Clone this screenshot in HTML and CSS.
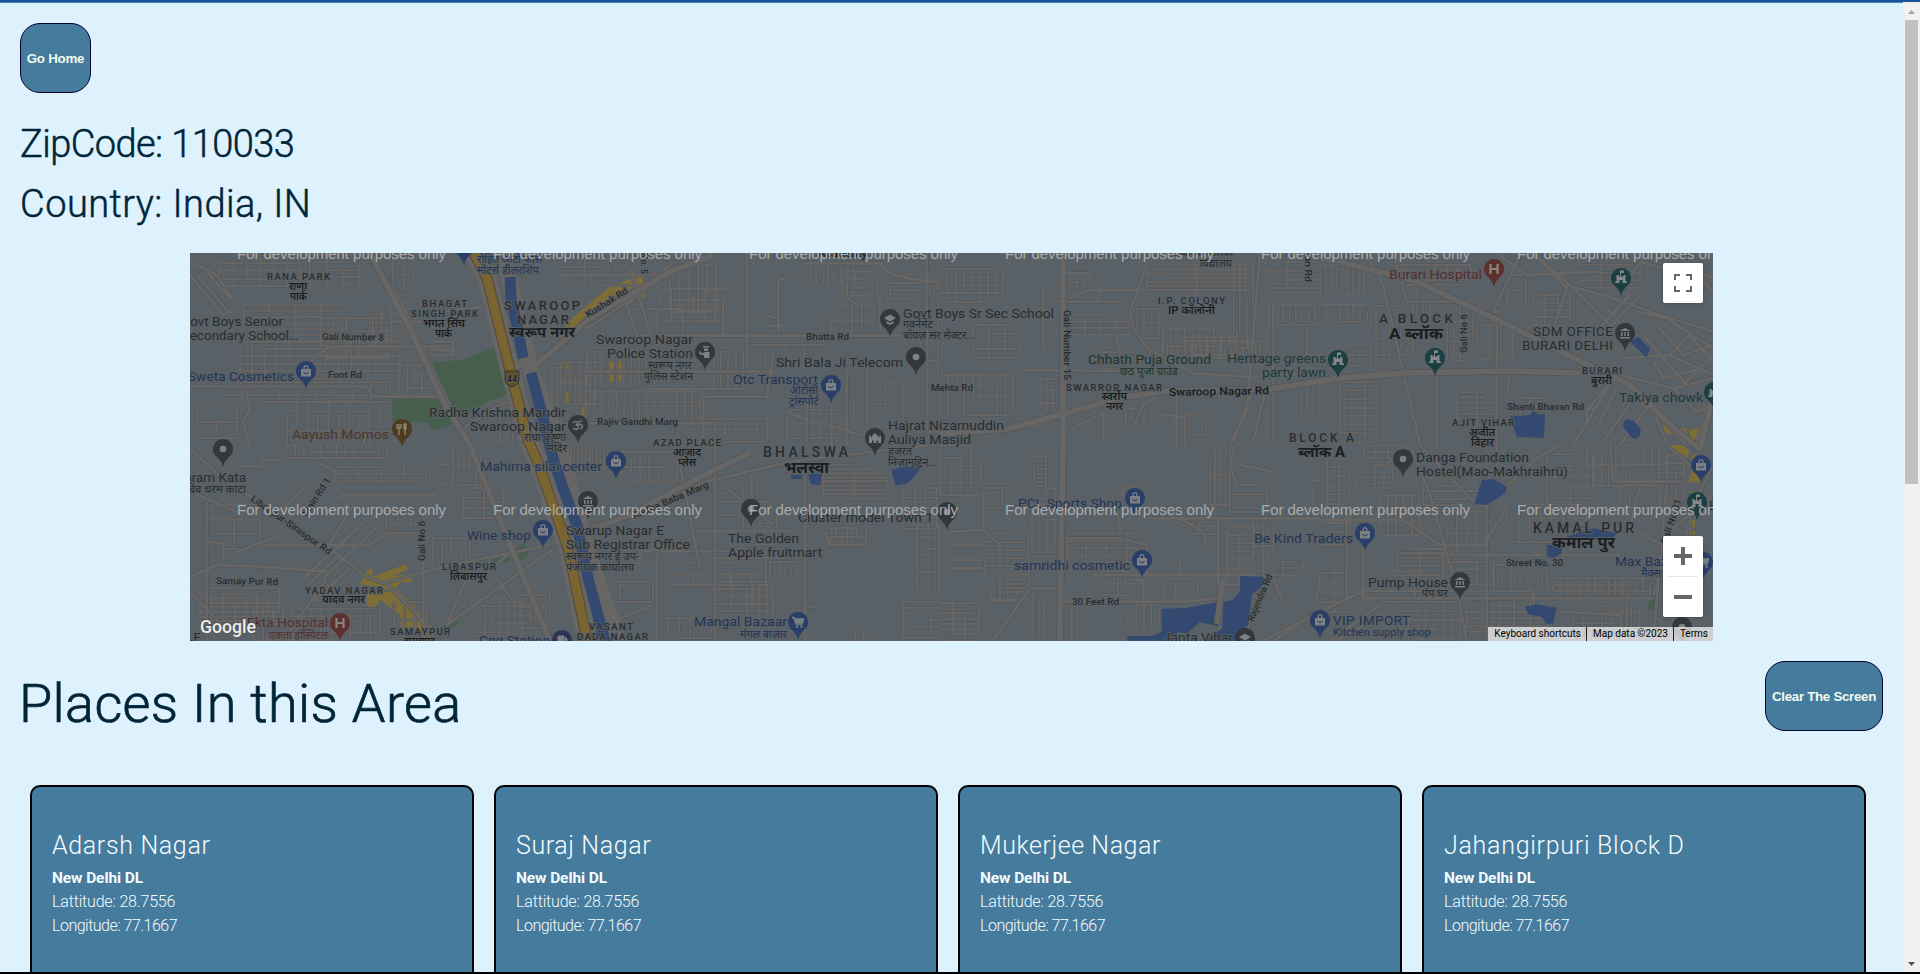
FILE: index.html
```html
<!DOCTYPE html>
<html lang="en">
<head>
<meta charset="utf-8">
<title>ZipCode Places</title>
<link rel="stylesheet" href="styles.css">
</head>
<body>
<div class="window">
  <main class="page">
    <button class="btn home">Go Home</button>
    <h2 class="info">
      <span class="info-line zip">ZipCode: 110033</span>
      <span class="info-line country">Country: India, IN</span>
    </h2>
    <section class="map">
      <svg class="map-canvas" id="map" viewBox="190 253 1523 388"></svg>
      <div class="control fullscreen">
        <svg width="18" height="18" viewBox="0 0 18 18"><path d="M0 0v6h2V2h4V0zM16 0h-4v2h4v4h2V0zM16 16h-4v2h6v-6h-2zM2 12H0v6h6v-2H2z" fill="#666"/></svg>
      </div>
      <div class="control zoom">
        <svg width="18" height="18" viewBox="0 0 18 18"><path d="M18 7h-7V0H7v7H0v4h7v7h4v-7h7z" fill="#666"/></svg>
        <i class="zoom-line"></i>
        <svg width="18" height="18" viewBox="0 0 18 18"><path d="M0 7h18v4H0z" fill="#666"/></svg>
      </div>
      <div class="credits"><span>Keyboard shortcuts</span><span>Map data ©2023</span><span>Terms</span></div>
    </section>
    <div class="places-head">
      <h1 class="places-title">Places In this Area</h1>
      <button class="btn clear">Clear The Screen</button>
    </div>
    <section class="cards">
      <article class="card"><h3 class="name n1">Adarsh Nagar</h3><b class="state">New Delhi DL</b><p class="coord">Lattitude: 28.7556</p><p class="coord long">Longitude: 77.1667</p></article>
      <article class="card"><h3 class="name n2">Suraj Nagar</h3><b class="state">New Delhi DL</b><p class="coord">Lattitude: 28.7556</p><p class="coord long">Longitude: 77.1667</p></article>
      <article class="card"><h3 class="name n3">Mukerjee Nagar</h3><b class="state">New Delhi DL</b><p class="coord">Lattitude: 28.7556</p><p class="coord long">Longitude: 77.1667</p></article>
      <article class="card"><h3 class="name n4">Jahangirpuri Block D</h3><b class="state">New Delhi DL</b><p class="coord">Lattitude: 28.7556</p><p class="coord long">Longitude: 77.1667</p></article>
    </section>
  </main>
  <aside class="scrollbar">
    <svg width="7" height="4" viewBox="0 0 7 4"><path d="M0 4h7L3.500 0z" fill="#a3a3a3"/></svg>
    <i class="thumb"></i>
    <svg class="down" width="7" height="4" viewBox="0 0 7 4"><path d="M0 0h7L3.500 4z" fill="#505050"/></svg>
  </aside>
</div>
<script src="map.js"></script>
</body>
</html>
```

FILE: styles.css
```css
* { box-sizing: border-box; }
body { margin: 0; height: 974px; overflow: hidden; font-family: Roboto, "Open Sans", sans-serif; background: #def2fe; }
.window { height: 974px; display: flex; border-top: 2px solid #1a529a; border-bottom: 2px solid #000; box-shadow: inset 0 1px 0 #4585bd; overflow: hidden; }
.page { flex: 1; padding: 21px 20px 0; height: 970px; overflow: hidden; }
.btn { display: block; height: 70px; padding: 0; border: 1px solid #03032e; border-radius: 20px; background: #457b9d; color: #f1faee; font: bold 13.33px "Liberation Sans", Arial, sans-serif; white-space: nowrap; }
.home { width: 71px; letter-spacing: -.25px; }
.clear { width: 118px; letter-spacing: -.3px; }
.info { margin: 21px 0 0; font-weight: 300; font-size: 38px; line-height: 60px; color: #002538; -webkit-text-stroke: .5px #002538; }
.info-line { display: block; width: max-content; }
.zip { letter-spacing: -.57px; }
.country { letter-spacing: .45px; }
.map { position: relative; width: 1523px; height: 388px; margin: 19px 0 0 170px; overflow: hidden; background: #596167; }
.map-canvas { display: block; width: 1523px; height: 388px; }
.control { position: absolute; right: 10px; width: 40px; background: #fff; border-radius: 2px; display: flex; flex-direction: column; align-items: center; box-shadow: 0 1px 4px -1px rgba(0,0,0,.3); }
.fullscreen { top: 10px; height: 40px; justify-content: center; }
.zoom { bottom: 24px; height: 81px; justify-content: space-between; padding: 11px 0; }
.zoom-line { width: 30px; height: 1px; background: #e6e6e6; }
.credits { position: absolute; right: 0; bottom: 0; height: 14px; display: flex; background: rgba(245,245,245,.74); font-size: 10px; line-height: 14px; color: #000; }
.credits span { padding: 0 5px 0 6px; }
.credits span + span { border-left: 1px solid #222; }
.places-head { display: flex; justify-content: space-between; align-items: flex-start; margin-top: 20px; height: 124px; }
.places-title { margin: 8px 0 0 -1px; font-weight: 300; font-size: 54px; line-height: 70px; letter-spacing: .35px; color: #002538; -webkit-text-stroke: .7px #002538; }
.cards { display: grid; grid-template-columns: repeat(4, 444px); column-gap: 20px; padding-left: 10px; }
.card { height: 260px; padding: 39px 20px; border: 2px solid #000; border-radius: 10px; background: #457b9d; color: #f5fbfd; }
.name { margin: 0; font-weight: 300; font-size: 25px; line-height: 40px; white-space: nowrap; width: max-content; }
.n1 { letter-spacing: .65px; }
.n2 { letter-spacing: .6px; }
.n3 { letter-spacing: .55px; }
.n4 { letter-spacing: .72px; }
.state { display: block; width: max-content; font-size: 15.500px; line-height: 24px; letter-spacing: -.1px; }
.coord { margin: 0; width: max-content; font-weight: 300; font-size: 16px; line-height: 24px; letter-spacing: -.17px; }
.long { letter-spacing: -.5px; }
.scrollbar { width: 17px; background: #f1f1f1; display: flex; flex-direction: column; align-items: center; padding: 8px 0 6px; }
.thumb { width: 13px; height: 464px; margin-top: 6px; background: #c1c1c1; }
.down { margin-top: auto; }
```

FILE: map.js
```javascript
const svg = document.getElementById('map');
const road = '#686665', edge = '#52575b';
const out = [];
let seed = 7;
const rnd = () => (seed = (seed * 16807) % 2147483647) / 2147483647;

// Blocks of small lanes: x, y, width, height, columns, rows
function lanes(x, y, w, h, cols, rows) {
  let d = '';
  for (let i = 0; i < cols; i++) {
    const cx = x + (w * i) / Math.max(1, cols - 1) + (rnd() - .5) * 4;
    const a = rnd() < .6 ? 0 : rnd() * h * .45, b = rnd() < .6 ? 0 : rnd() * h * .45;
    d += `M${cx.toFixed(1)} ${(y + a).toFixed(1)}V${(y + h - b).toFixed(1)}`;
  }
  for (let j = 0; j < rows; j++) {
    const cy = y + (h * j) / Math.max(1, rows - 1) + (rnd() - .5) * 4;
    const a = rnd() < .6 ? 0 : rnd() * w * .45, b = rnd() < .6 ? 0 : rnd() * w * .45;
    d += `M${(x + a).toFixed(1)} ${cy.toFixed(1)}H${(x + w - b).toFixed(1)}`;
  }
  return d;
}

// Each sheet is drawn at three units per pixel.
const sheets = [
  { at: [180, 245],
    blue: '', green: 'M755 352L845 345L942 308L985 448L925 470L870 500L808 515ZM637 460L790 458L828 535L757 557L745 532L637 530Z',
    lanes: [[120,30,240,95,7,5],[390,30,150,110,4,6],[190,180,310,110,5,7],[180,290,480,110,14,6],[420,220,200,120,6,4],[570,185,130,120,5,6],[130,410,500,60,10,4],[320,470,280,130,10,4],[640,30,60,120,3,3],[660,360,90,100,5,4],[50,480,120,100,3,3],[1100,370,100,200,7,1],[920,470,80,120,3,2]],
    roads: 'M30 90L130 210L160 190M30 50L110 90L160 165M570 24L660 165L700 250L800 460L860 590M700 210L910 185M30 425H560L580 455H800M200 445L210 490L190 530L210 600M410 330L450 305H790M760 290H820V330H750M750 315H820M640 230H800M550 600L560 560H640M840 555L960 480L1010 465M50 90L150 205M80 80L150 160M1000 380L1060 360L1090 340L1200 225' },
  { at: [180, 445],
    green: 'M935 340L985 318L990 345L945 366ZM1003 308L1035 293L1048 325L1020 347ZM780 548L832 515L836 538L800 555Z',
    yellow: 'M560 378L580 370L575 395L680 357L682 375L640 392L698 388L695 412L660 412L640 440L600 425L540 418L550 398ZM560 440H625L650 435L690 470L765 560L760 587L700 545L665 550L660 510L600 465L580 495L560 480Z',
    lanes: [[320,0,300,40,13,3],[470,65,270,45,5,3],[820,0,100,120,7,3],[850,130,120,90,3,4],[80,180,160,130,3,4],[60,430,240,100,8,8],[220,490,380,97,14,5],[580,200,150,70,5,3],[760,280,110,90,5,2],[640,470,100,110,4,3],[870,460,180,127,9,6],[1020,420,90,160,3,6],[750,60,70,60,3,2]],
    roads: 'M30 10L110 85L240 175L440 305L560 395L610 415L790 365L1110 300M80 170V587M80 290L130 295V340M30 140L180 205M175 65H245V45H300M410 50L470 80L460 110M470 160L490 150H770M620 265H740M860 400L800 540L1115 315M30 395L110 360L250 365L440 380M380 120L300 200M555 230L370 400M590 245L430 400M520 180L440 310M480 330L370 430M870 0L990 290L1110 587M1010 300L900 410M950 400L1000 470M730 220V580M620 415L720 520L770 587M440 400L310 587M510 370L400 470M160 325L300 270M250 300H570L620 265M30 440L170 587' },
  { at: [560, 245],
    yellow: 'M30 225L100 165L150 125L248 88L250 115L180 145L110 185L45 245L0 290V265ZM130 190L250 125L255 155L215 165L135 200ZM145 350h16v22h-16ZM172 348h16v25h-16ZM145 388h16v22h-16ZM170 387h16v22h-16ZM0 350h8v24h-8ZM20 348h12v25h-12ZM25 388h8v22h-8ZM18 440h8v35h-8ZM42 440h8v35h-8ZM65 486h18v25h-18Z',
    lanes: [[0,40,220,80,4,4],[330,60,140,140,6,3],[300,130,200,100,7,4],[80,320,470,110,22,3],[0,350,120,130,9,3],[80,440,340,90,16,3],[850,80,100,70,4,4],[810,180,130,90,5,3],[990,90,120,70,2,4],[560,300,230,70,5,1],[680,450,200,130,3,4],[750,60,130,60,8,1],[920,350,110,190,3,4],[1100,60,100,500,4,8],[340,520,280,70,10,3],[130,190,240,80,4,2]],
    roads: 'M0 275L90 245L280 120L340 75L460 30M0 90H330M65 380H640M370 272H1200M340 50L200 180L240 300M210 70L275 280M560 24V310M490 160V270M655 265V110Q655 100 675 100M620 210L650 220M620 245L670 240M730 55H970M960 60L1000 90L1100 110H1200M860 120V155L890 180M960 150V265M780 530L900 570M680 500L740 525M740 590V460M430 600V455H620L640 330M860 375V600M0 535H460M1100 24V300M815 480V600' },
  { at: [560, 445],
    blue: 'M994 75L1035 62L1085 65L1060 98L1040 116L1006 121ZM693 90H726V102H693ZM745 88L787 85L780 120L752 118Z',
    lanes: [[0,0,120,80,12,2],[130,20,250,90,10,3],[790,60,190,100,3,9],[700,0,130,40,3,3],[1030,130,170,120,6,5],[1070,240,100,210,4,7],[800,250,120,55,9,3],[290,320,330,100,4,4],[450,390,190,110,4,6],[560,420,80,110,5,1],[700,420,60,60,1,2],[1030,470,170,110,3,7],[150,410,130,60,2,2],[290,520,200,60,7,2],[630,350,80,50,6,1],[550,170,100,130,3,3],[470,130,80,80,2,2]],
    roads: 'M735 90V587M0 275L220 215L440 110L690 50L1200 -10M465 0V587M460 340L790 335M575 90V160M500 130L640 240M360 60L420 370M290 345V587M240 320V355H215M490 170H620L660 215M410 258H700M250 320L390 300M740 485H765M795 260L810 300H920M180 460V420H200M130 540L280 480M885 587V550M910 587V560' },
  { at: [940, 245],
    lanes: [[0,70,190,100,9,5],[100,240,140,120,4,6],[0,390,220,120,10,5],[390,80,60,60,4,3],[390,210,180,60,5,4],[620,60,300,90,3,8],[880,60,60,250,4,2],[590,190,70,90,4,3],[670,250,220,80,11,4],[630,290,330,50,20,2],[990,180,210,60,12,2],[980,50,180,80,4,4],[300,400,60,110,4,4],[560,490,70,50,5,1],[700,510,100,60,3,2],[1080,420,60,100,4,1],[480,320,120,50,3,3]],
    roads: 'M378 24V587M380 85H450M470 170L485 130M390 160L440 135H600M545 170H345M310 130V310M620 60L570 200L580 250L620 310L760 385L920 395L1200 380M240 375L640 380M0 565L200 555L300 540L370 510L540 460L680 440M990 435L1200 395M390 555L490 505M490 500V580M710 440V600M530 270L545 360M650 455L610 480L580 545M960 24L920 500L870 600M1000 180V587M980 420L940 587M940 430L880 590M660 510H690L735 520V600M1100 250V330H1200' },
  { at: [940, 445],
    blue: 'M665 492L740 488L830 472L835 545L780 532L740 565L712 562L700 587H562V574L640 572L665 560ZM900 393L970 395L978 412L935 450L925 540L900 560L880 590H790L847 550L850 470L878 466L900 440Z',
    lanes: [[0,0,125,150,5,5],[130,130,110,60,3,2],[280,35,40,90,2,8],[135,265,130,200,2,9],[275,130,90,190,5,5],[380,265,240,110,5,6],[515,125,100,40,4,3],[810,0,60,180,5,3],[870,120,110,80,2,4],[150,430,110,35,5,2],[0,475,115,110,4,8],[485,380,120,70,6,3],[860,220,80,200,3,9],[545,480,110,80,6,1],[670,400,140,70,5,1],[940,220,60,170,3,3],[970,350,120,40,3,3],[1120,80,80,140,3,6],[720,220,110,45,3,3],[280,430,50,150,4,1]],
    roads: 'M376 0L370 300L360 587M130 255L30 260M130 140V255L180 300V460M620 220H1200M380 280H540L620 300V390M460 390H940L1000 400L1030 475M370 470H730L830 460M835 220V587M360 430H270L160 587M1160 230L1130 470L1200 500M30 300H130M35 370H130M30 345H130M720 350V390M700 500L830 545M740 560L780 530L850 550M575 405H610V465M395 480V587M720 220L790 260L800 300M970 587L1200 470M1000 587L1150 490M885 0L870 60L890 120M900 60L1000 80M980 390L925 540V587M540 265L530 180' },
  { at: [1320, 245],
    blue: 'M570 515L630 510L640 498L655 508H675L672 580L590 575ZM930 290L955 275L990 310L980 338ZM915 525C935 515 960 545 963 560C955 590 935 585 925 565C910 550 905 540 915 525Z',
    yellow: 'M1110 555L1140 545L1160 520L1155 600H1105ZM1150 480H1175L1160 525L1148 500ZM1150 430L1165 425L1160 460ZM1030 540L1058 535V570L1030 560ZM1080 550h20v25h-20Z',
    lanes: [[0,60,150,90,10,2],[0,180,140,50,8,2],[60,410,110,180,4,8],[240,60,210,60,7,5],[380,170,80,180,5,4],[640,150,110,90,4,5],[560,90,60,90,3,3],[470,240,110,100,4,2],[290,130,80,80,5,3],[410,440,120,100,3,7],[780,60,180,70,4,4],[170,180,110,200,4,5],[60,300,90,60,4,3],[600,460,80,60,4,2]],
    roads: 'M0 45L140 60L290 110L520 215L760 330L840 380L930 420L1000 500L1100 600M0 400L250 385L570 378L780 385M130 24L180 90L220 250L300 600M220 24L260 170H450M540 200L520 200L600 30M640 24L760 130L900 270M530 24L620 90L840 80M530 230V600M480 230V180M880 400L760 600M870 410L800 500V540M900 390L1060 430L1179 400M900 340L1050 330L1179 390M950 200L1040 220L1179 310M1010 240L1090 330L1179 300M740 120L880 160L1020 210L1179 260M820 270L930 150M840 280L950 160M860 190L900 230M1070 24L1179 140M890 430L830 550M940 460L850 590M980 490L900 600M970 270L1100 420M1050 330L1110 270L1179 350M1080 430L1179 330M1060 430L1130 500L1179 480M600 485L820 490M570 380L560 450M350 380V600M1040 590L1000 500L940 460M1120 24L1100 60L1179 100M1130 590L1179 430M0 70V160M640 24L740 130L700 250M1000 350L1030 400L1150 370M900 140L960 50L1100 90' },
  { at: [1320, 445],
    blue: 'M463 178L485 105L520 102L560 125L555 145L500 180ZM740 275L820 250L890 265L870 290L815 282L740 285ZM680 300L728 300L725 325L700 340L680 332ZM615 485L650 478L710 488L700 535L680 538L665 515L625 508Z',
    yellow: 'M1045 0H1090L1110 20L1100 40ZM1130 30H1115V80L1105 110L1140 115V60ZM1110 140h20v40h-20ZM1105 225h20v20h-20ZM1100 258h25v12h-25Z',
    green: 'M985 475L1005 460L1010 495H985Z',
    lanes: [[20,40,70,220,3,9],[110,60,110,70,5,3],[130,0,180,40,6,3],[180,150,120,120,6,4],[310,100,170,100,2,6],[680,30,140,160,3,6],[800,0,240,120,12,3],[560,180,240,110,8,4],[380,200,120,130,5,3],[230,310,140,80,3,4],[140,380,180,90,6,4],[370,350,150,90,4,5],[440,460,240,120,6,7],[700,400,290,60,15,4],[0,300,90,200,3,8],[760,470,200,100,8,4],[1020,30,70,130,4,6],[240,470,180,110,8,5],[520,360,160,80,7,2],[900,120,120,70,5,3]],
    roads: 'M270 0L330 150L410 430L440 587M300 0L470 180H500L650 40L720 0M0 225H250L360 300H500M530 0V100M130 230V460H400M80 180V470M500 180V587M870 0L880 110H1090M1040 120L1000 587M1179 150L1060 250L1000 450M560 190L490 300M410 460H1000M440 330H900M0 500L150 430M30 587L180 480M50 587L200 500M960 120L930 250L1030 300M840 190L780 240M1040 0L1120 70M1179 60L1110 200V270M240 325H370V450M720 500L900 510M640 430V480M920 450V587M250 0L200 60' }
];

out.push('<rect x="190" y="253" width="1523" height="388" fill="#596167"/>');
for (const s of sheets) {
  const wide = s.at[0] === 1320;
  out.push(`<svg x="${s.at[0]}" y="${s.at[1]}" width="${wide ? 400 : 380}" height="200" viewBox="0 0 ${wide ? 1200 : 1140} 600">`);
  const d = s.lanes.map(l => lanes(...l)).join('');
  if (s.yellow) out.push(`<path d="${s.yellow}" fill="#7d6d37"/>`);
  out.push(`<path d="${d}" stroke="${edge}" stroke-width="9"/><path d="${d}" stroke="${road}" stroke-width="6"/>`);
  if (s.green) out.push(`<path d="${s.green}" fill="#47604e"/>`);
  out.push(`<path d="${s.roads}" stroke="${edge}" stroke-width="12"/><path d="${s.roads}" stroke="${road}" stroke-width="8.500"/>`);
  if (s.blue) out.push(`<path d="${s.blue}" fill="#34496f"/>`);
  out.push('</svg>');
}

// Main roads, canal and highway
const main = 'M1063 253V445L1060 641M750 453L700 477L630 515L560 540M940 434L1007 429L1063 414L1120 398L1166 391L1270 389L1340 378L1405 373L1510 371L1580 373M1340 262L1416 281L1500 321L1600 371L1630 385L1660 415L1700 450M370 253L413 335L445 405L470 445L510 545L550 641M500 369L540 362L590 318L670 272L713 255M1700 450L1712 400M1217 624L1223 581';
const canal = 'M510 277L511 298L517 325L523 358M531 373L543 418L553 458L563 488L577 525L588 578L606 645';
const way = 'M474 253L487 278L512 378L528 440L537 460L568 548L588 645';
out.push(`<path d="${main}" stroke="${edge}" stroke-width="7"/><path d="${main}" stroke="${road}" stroke-width="5.500"/>
<path d="${way}" stroke="${road}" stroke-width="19"/><path d="M500 250L512 290L532 375L550 420L566 470L580 525L600 590L620 645" stroke="${road}" stroke-width="16"/>
<path d="${canal}" stroke="#34496f" stroke-width="11"/>
<path d="${way}" stroke="#4f4a39" stroke-width="11"/><path d="${way}" stroke="#7a6531" stroke-width="9"/>
<path d="M505 371h14v8q0 6-7 8q-7-2-7-8z" fill="#5c5029" stroke="#3c3829" stroke-width="1"/>`);

const C = { g: '#292c2f', k: '#1b1d1f', b: '#223454', n: '#4e3328', r: '#552f2d', t: '#1d393a', e: '#20352a' };
// Map pins: x, y, colour, glyph
const glyphs = {
  bag: '<path d="M-5-2H5V5.500H-5zM-2.500-2V-3.500Q-2.500-6 0-6T2.500-3.500V-2h-1.300v-1.500Q1.200-4.700 0-4.700t-1.200 1.200V-2z" fill="#7d8184"/><path d="M-2.500 1Q0 4.500 2.500 1" stroke="#2b4068" stroke-width="1.200"/>',
  dot: '<circle r="3.300" fill="#7d8184"/>',
  bank: '<path d="M-5.500-2L0-5L5.500-2zM-5 4H5V5.500H-5zM-4-1h1.500v4H-4zM-.75-1h1.500v4h-1.500zM2.500-1H4v4H2.500z" fill="#7d8184"/>',
  fort: '<path d="M-6 5V3.500h1.500V-3h2v1.500h1.500V-7.500H3V-5H0v3.500h2.500V-3h2V3.500H6V5H1.500V2h-3V5z" fill="#85898b"/>',
  hosp: '<path d="M-3.500-5V5M3.500-5V5M-3.500 0H3.500" stroke="#8a8583" stroke-width="2.200"/>',
  food: '<path d="M-3-5V6M-5-5v4h4v-4M3-5V6M2-5h2v5H2z" stroke="#8b8375" stroke-width="1.400"/>',
  cap: '<path d="M-6-1L0-4.500L6-1L0 2.500zM-3.500 2V4.500L0 6L3.500 4.500V2L0 4z" fill="#7d8184"/>',
  cart: '<path d="M-6-4.500H-4L-2 2H4L5.500-3H-3.500" stroke="#7d8184" stroke-width="1.500"/><path d="M-3-3H5L4 1H-2z" fill="#7d8184"/><circle cx="-1" cy="4.500" r="1.200" fill="#7d8184"/><circle cx="3.500" cy="4.500" r="1.200" fill="#7d8184"/>',
  pol: '<path d="M-2-6H4V-4.500H-2zM-1-3.500H3V-1H-1zM0 0H4.500V6H-1V3.500L-5.500 2L-6-1L-4 0L-3 1.500z" fill="#7d8184"/>',
  om: '<path d="M-5-2Q-3-4-1-3T-2 0Q1 0 0 3T-5 3M0 1Q2-2 4 0T2 4M0-4Q2-2 4-5M2-6v-.5" stroke="#7d8184" stroke-width="1.300"/>',
  mosque: '<path d="M-6 5V-1l1-2 1 2V1Q-3-3 0-5Q3-3 4 1V-1l1-2 1 2V5H3V2.500h-1.500V5h-3V2.500H-3V5z" fill="#7d8184"/>',
  gas: '<path d="M-4-4H2V5H-4zM3-3L5-1V4H3" fill="#7d8184" stroke="#7d8184"/>'
};
const fills = { b: '#2a3f68', g: '#35383b', t: '#1c3f41', r: '#5c302d', n: '#4f3b20', p: '#2f3455' };
const pins = [[306,371,'b','bag'],[402,429,'n','food'],[464,247,'b','bag'],[223,449,'g','dot'],[543,530,'b','bag'],[340,623,'r','hosp'],[562,640,'p','gas'],[616,461,'b','bag'],[578,425,'g','om'],[705,352,'g','pol'],[831,385,'b','bag'],[916,357,'g','dot'],[890,319,'g','cap'],[875,438,'g','mosque'],[588,501,'g','bank'],[751,509,'g','dot'],[947,512,'g','dot'],[798,622,'b','cart'],[1338,360,'t','fort'],[1135,498,'b','bag'],[1142,560,'b','bag'],[1245,638,'g','cap'],[1365,533,'b','bag'],[1320,620,'b','bag'],[1494,269,'r','hosp'],[1621,278,'t','fort'],[1435,358,'t','fort'],[1625,333,'g','bank'],[1714,392,'t','fort'],[1403,459,'g','dot'],[1703,562,'b','cart'],[1460,582,'g','bank'],[1701,465,'b','bag'],[1697,502,'t','fort'],[1682,627,'g','dot']];
for (const [x, y, c, g] of pins)
  out.push(`<g transform="translate(${x} ${y})"><path d="M0 18.500C-1 13-3 11.500-6 8A10 10 0 1 1 6 8C3 11.500 1 13 0 18.500Z" fill="${fills[c]}"/>${glyphs[g]}</g>`);

// Labels: text, left, baseline, width, size, colour, weight, rotation
const T = [
['RANA PARK',267,280,63,9.5,'g',500],['राणा',289,290,18,10,'k',600],['पार्क',290,300,17,10,'k',600],
['Govt Boys Senior',181,326,102,13.5,'g'],['Secondary School…',182,340,116,13.5,'g'],['Gali Number 8',322,340,62,9.5,'g',500,.7],
['Sweta Cosmetics',188,381,106,13.5,'b'],['Foot Rd',328,378,34,9.5,'g',500],
['BHAGAT',422,307,45,9.5,'g',500],['SINGH PARK',411,317,67,9.5,'g',500],['भगत सिंघ',423,327,42,10,'k',600],['पार्क',435,337,17,10,'k',600],
['रोहित ऑटो फार्स',477,263,65,10,'b'],['मोटर्स डीलरशिप',477,274,62,10,'b'],
['SWAROOP',504,310,76,13,'g',500],['NAGAR',517,324,52,13,'g',500],['स्वरूप नगर',509,337,66,12.5,'k',700],['44',507,382,10,8.5,'k',500],
['Radha Krishna Mandir',429,417,137,13.5,'g'],['Swaroop Nagar',470,431,96,13.5,'g'],['राधा कृष्णा',524,441,42,10,'g'],['मंदिर',547,452,20,10,'g'],
['Aayush Momos',292,439,97,13.5,'n'],['Param Kata',176,482,70,13.5,'g'],['देव धरम काटा',189,493,57,10,'g'],
['Libaspur-Siraspur Rd',250,500,96,9.5,'g',500,35],['Main Rd 1',307,517,44,9.5,'g',500,-57],['Gali No 6',425,561,40,9.5,'g',500,-90],
['Samay Pur Rd',216,584,62,9.5,'g',500,1],['YADAV NAGAR',305,594,78,9.5,'g',500],['यादव नगर',322,603,43,10,'k',600],
['LIBASPUR',442,570,54,9.5,'g',500],['लिबासपुर',450,580,37,10,'k',600],['Wine shop',467,540,64,13.5,'b'],
['Ekta Hospital',247,627,81,13.5,'r'],['एकता हॉस्पिटल',269,639,59,10,'r'],['SAMAYPUR',390,635,60,9.5,'g',500],['समयपुर',404,645,31,10,'k',600],
['Cng Station',479,645,71,13.5,'b'],['JE',190,642,11,13,'g'],['F',577,643,7,13,'g'],
['Mahima silai center',480,471,122,13.5,'b'],['Swarup Nagar E',566,535,98,13.5,'g'],['Sub Registrar Office',566,549,124,13.5,'g'],['स्वरूप नगर ई उप-',566,560,73,10,'g'],['पंजीयक कार्यालय',566,571,68,10,'g'],
['Kushak Rd',588,318,48,9.5,'g',500,-32],['Rd No. 5',641,240,34,9.5,'g',500,90],
['Swaroop Nagar',596,344,97,13.5,'g'],['Police Station',607,358,86,13.5,'g'],['स्वरूप नगर',648,369,44,10,'g'],['पुलिस स्टेशन',644,380,49,10,'g'],
['Rajiv Gandhi Marg',597,425,81,9.5,'g',500],['AZAD PLACE',653,446,68,9.5,'g',500],['आजाद',673,456,28,10,'k',600],['प्लेस',678,466,18,10,'k',600],
['Bhatta Rd',806,340,43,9.5,'g',500],['Otc Transport',733,384,85,13.5,'b'],['ओटीसी',790,394,28,10,'b'],['ट्रांसपोर्ट',789,405,30,10,'b'],
['Shri Bala Ji Telecom',776,367,127,13.5,'g'],['Govt Boys Sr Sec School',903,318,151,13.5,'g'],['गवर्नमेंट',903,328,30,10,'g'],['बॉयज़ सर सेक्टर...',903,339,72,10,'g'],
['Mehta Rd',931,391,42,9.5,'g',500],['Hajrat Nizamuddin',888,430,116,13.5,'g'],['Auliya Masjid',888,444,83,13.5,'g'],['हजरत',888,455,24,10,'g'],['निज़ामुद्दिन...',888,466,49,10,'g'],['Academy',818,257,49,12,'k'],
['Radha Baba Marg',634,519,82,9.5,'g',500,-23],['BHALSWA',763,457,85,14,'g',500],['भलस्वा',784,473,45,14,'k',700],
['The Golden',728,543,71,13.5,'g'],['Apple fruitmart',728,557,94,13.5,'g'],['Cluster model Town 1',798,522,135,13.5,'g'],
['Mangal Bazaar',694,626,93,13.5,'b'],['मंगल बाज़ार',740,638,47,10,'b'],['VASANT',589,630,44,9.5,'g',500],['DADA NAGAR',577,640,71,9.5,'g',500],
['Gali Number 15',1064,310,70,9.5,'g',500,90],['I.P. COLONY',1158,304,67,9.5,'g',500],['IP कॉलोनी',1168,314,47,10,'k',600],
['Chhath Puja Ground',1088,364,123,13.5,'e'],['छठ पूजा ग्राउंड',1120,375,58,10,'e'],['SWARROP NAGAR',1066,391,96,9.5,'g',500],['स्वर्रोप',1102,400,25,10,'k',600],['नगर',1106,410,17,10,'k',600],
['Swaroop Nagar Rd',1169,396,100,11,'k',500,-1],['Heritage greens',1227,363,99,13.5,'t'],['party lawn',1262,377,64,13.5,'t'],['माध्यमिक बालिका',1170,256,63,10,'g'],['विद्यालय',1200,267,32,10,'g'],['Dhan Rd',1305,243,39,9.5,'g',500,90],
['BLOCK A',1289,442,65,12,'g',500],['ब्लॉक A',1298,457,47,13,'k',700],['PCL Sports Shop',1018,508,104,13.5,'b'],['samridhi cosmetic',1014,570,116,13.5,'b'],['30 Feet Rd',1072,605,47,9.5,'g',500],['Janta Vihar',1163,642,70,13.5,'g'],
['Rajendra Rd',1253,622,50,9.5,'g',500,-67],['Be Kind Traders',1254,543,99,13.5,'b'],['VIP IMPORT',1333,625,77,13.5,'b'],['Kitchen supply shop',1333,636,98,10,'b'],
['Burari Hospital',1389,279,93,13.5,'r'],['A BLOCK',1379,323,74,13.5,'g',500],['A ब्लॉक',1389,339,54,13.5,'k',700],['Gali No 6',1467,353,39,9.5,'g',500,-90],
['SDM OFFICE',1533,336,80,13.5,'g'],['BURARI DELHI',1522,350,91,13.5,'g'],['BURARI',1582,374,40,9.5,'g',500],['बुरारी',1591,384,21,10,'k',600],
['Takiya chowk',1619,402,84,13.5,'t'],['Shanti Bhavan Rd',1507,410,77,9.5,'g',500],['AJIT VIHAR',1452,426,62,9.5,'g',500],['अजीत',1469,436,26,10,'k',600],['विहार',1471,446,23,10,'k',600],
['Danga Foundation',1416,462,113,13.5,'g'],['Hostel(Mao-Makhraihrü)',1416,476,152,13.5,'g'],['KAMAL PUR',1533,533,101,14,'g',500],['कमाल पुर',1552,548,63,14,'k',700],['Street No. 30',1506,566,57,9.5,'g',500],
['Max Bazaar',1615,566,72,13.5,'b'],['मैक्स',1641,577,20,10,'b'],['Pump House',1368,587,80,13.5,'g'],['पंप घर',1422,597,26,10,'g'],['Gali No 31',1667,545,47,9.5,'g',500,-72],['E',1709,510,8,13,'t'],['Manoj Prakash Books',1544,637,124,13.5,'g']
];
for (const [t, x, y, w, s, c, wt = 400, r = 0] of T) {
  // Devanagari keeps its joined headline only when glyphs scale with the run
  const hindi = /[\u0900-\u097f]/.test(t);
  const caps = t === t.toUpperCase() && s < 15 && !hindi;
  const adjust = hindi || !caps ? 'spacingAndGlyphs' : 'spacing';
  out.push(`<text x="${x}" y="${y}" textLength="${w}" lengthAdjust="${adjust}" font-size="${hindi ? s * 1.12 : s}" font-weight="${wt}" fill="${C[c]}" stroke="#5c6266" stroke-width="1.600" paint-order="stroke" transform="rotate(${r} ${x} ${y})">${t}</text>`);
}

for (const y of [259, 515])
  for (let i = 0; i < 6; i++)
    out.push(`<text x="${237 + i * 256}" y="${y}" textLength="209" font-size="15" fill="#a9abad" font-family="Liberation Sans, Arial, sans-serif">For development purposes only</text>`);
out.push('<text x="200" y="633" textLength="56" lengthAdjust="spacingAndGlyphs" font-size="18.500" fill="#eee" font-weight="500" stroke="#555" stroke-width="1.500" paint-order="stroke">Google</text>');

svg.innerHTML = `<g fill="none" font-family="Roboto, Noto Sans, sans-serif" stroke-linejoin="round">${out.join('')}</g>`;
```
